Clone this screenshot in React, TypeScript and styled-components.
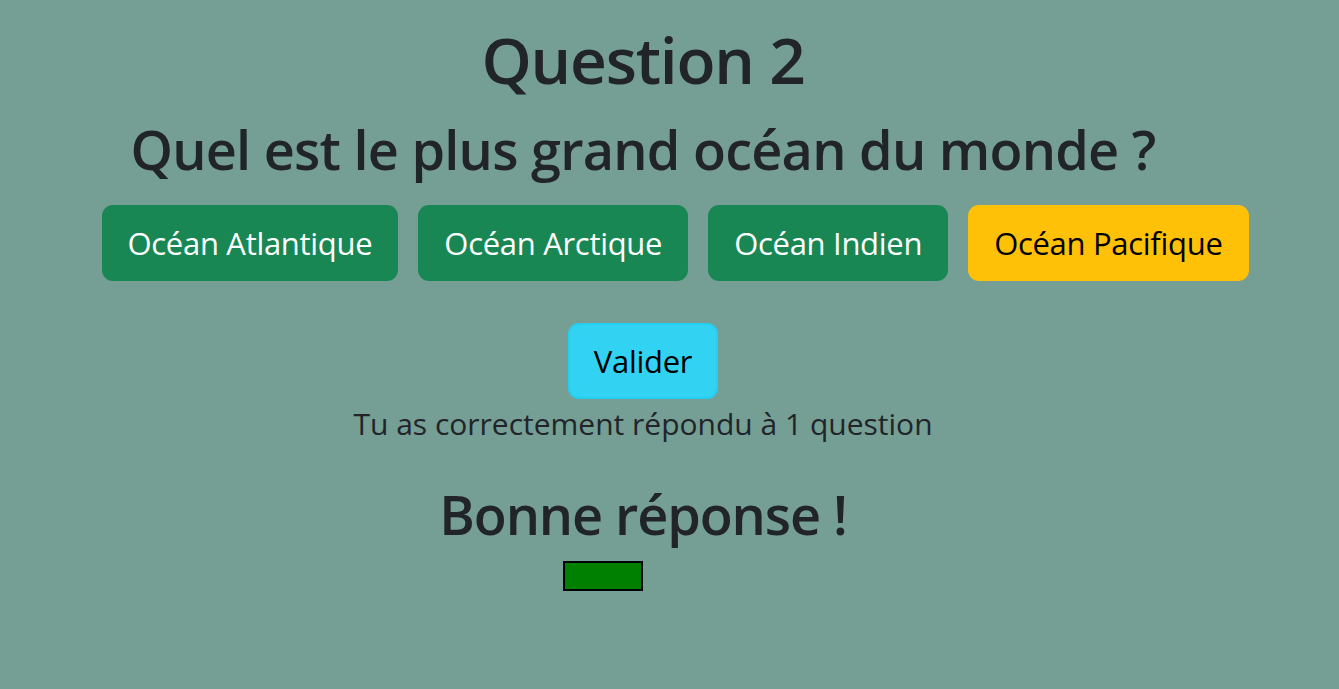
import React from "react";
import styled, { createGlobalStyle } from "styled-components";

const GlobalStyle = createGlobalStyle`
  html, body {
    margin: 0;
    padding: 0;
    background: #759e95;
  }
  body {
    font-family: "Open Sans", "Noto Sans", sans-serif;
    color: #212529;
  }
`;

const Page = styled.main`
  min-height: 689px;
  display: flex;
  flex-direction: column;
  padding-top: 22px;
  box-sizing: border-box;
`;

const TextBlock = styled.div`
  text-align: center;
  padding-right: 53px;
`;

const Title = styled.h1`
  margin: 0;
  font-size: 64px;
  font-weight: 600;
  line-height: 1.2;
  letter-spacing: -1.2px;
`;

const Heading = styled.h2<{ $mt: number; $ls: number }>`
  margin: ${(p) => p.$mt}px 0 0;
  font-size: 54px;
  font-weight: 600;
  line-height: 1.2;
  letter-spacing: ${(p) => p.$ls}px;
`;

const Options = styled.div`
  display: flex;
  justify-content: center;
  gap: 20px;
  padding-left: 11px;
  margin-top: 23px;
`;

const Btn = styled.button<{ $variant: "success" | "warning" | "info" }>`
  font-family: "Open Sans", "Noto Sans", sans-serif;
  font-size: 31px;
  line-height: 48px;
  padding: 12px 24px;
  border-radius: 11px;
  border: 2px solid
    ${(p) =>
      p.$variant === "success" ? "#198754" : p.$variant === "warning" ? "#ffc107" : "#25cff2"};
  background: ${(p) =>
    p.$variant === "success" ? "#198754" : p.$variant === "warning" ? "#ffc107" : "#31d2f2"};
  color: ${(p) => (p.$variant === "success" ? "#ffffff" : "#000000")};
  cursor: pointer;
  letter-spacing: -0.3px;
`;

const ValidateRow = styled.div`
  display: flex;
  justify-content: center;
  padding-right: 53px;
  margin-top: 42px;
`;

const Score = styled.p`
  margin: 0;
  font-size: 30px;
  line-height: 48px;
  letter-spacing: 0;
  padding-top: 1px;
`;

const ProgressRow = styled.div`
  display: flex;
  justify-content: center;
  padding-right: 133px;
  margin-top: 15px;
`;

const Bar = styled.div`
  width: 80px;
  height: 30px;
  box-sizing: border-box;
  border: 2px solid #000;
  background: #008000;
`;

const options = ["Océan Atlantique", "Océan Arctique", "Océan Indien", "Océan Pacifique"];

export default function App() {
  return (
    <>
      <GlobalStyle />
      <Page>
        <TextBlock>
          <Title>Question 2</Title>
          <Heading $mt={18} $ls={-0.75}>
            Quel est le plus grand océan du monde ?
          </Heading>
        </TextBlock>
        <Options>
          {options.map((o) => (
            <Btn key={o} $variant={o === "Océan Pacifique" ? "warning" : "success"}>
              {o}
            </Btn>
          ))}
        </Options>
        <ValidateRow>
          <Btn $variant="info">Valider</Btn>
        </ValidateRow>
        <TextBlock>
          <Score>Tu as correctement répondu à 1 question</Score>
          <Heading $mt={34} $ls={-1.1}>
            Bonne réponse !
          </Heading>
        </TextBlock>
        <ProgressRow>
          <Bar />
        </ProgressRow>
      </Page>
    </>
  );
}
